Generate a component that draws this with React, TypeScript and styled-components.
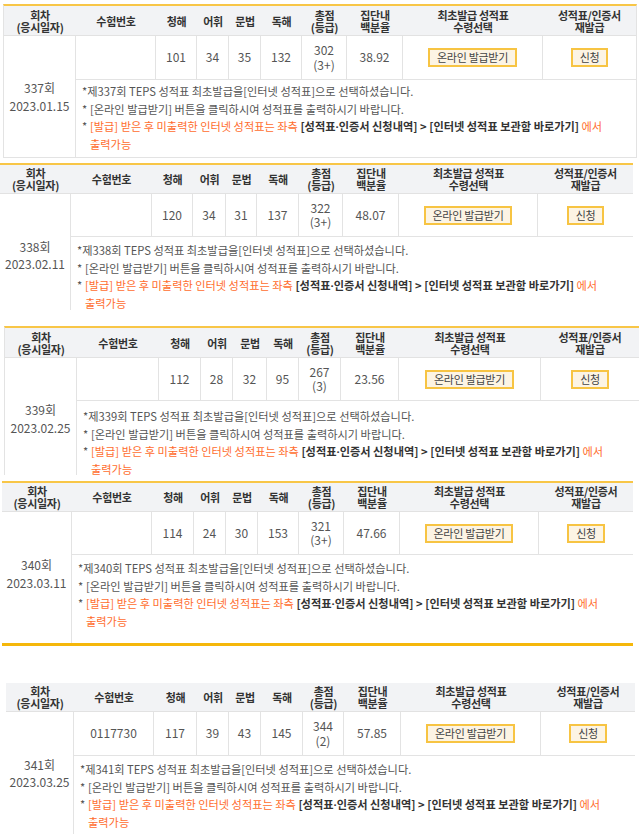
import React from 'react';
import styled, { createGlobalStyle } from 'styled-components';

const Global = createGlobalStyle`
  html, body { margin: 0; padding: 0; background: #fff; }
  body {
    width: 640px;
    overflow: hidden;
    font-family: "Noto Sans CJK KR", "Noto Sans", sans-serif;
    color: #555;
  }
`;

type Layout = {
  left: number;
  top: number;
  cols: number[];
  headerH: number;
  dataH: number;
  notesH: number;
  notesPad: number;
  topLine: boolean;
  frameL: boolean;
  frameR: boolean;
  frameB: boolean;
  thick: boolean;
  shift: number;
};

type Result = {
  round: number;
  date: string;
  exam: string;
  scores: number[];
  total: number;
  grade: string;
  pct: string;
  layout: Layout;
};

const results: Result[] = [
  {
    round: 337, date: '2023.01.15', exam: '', scores: [101, 34, 35, 132], total: 302, grade: '3+', pct: '38.92',
    layout: { left: 3, top: 4, cols: [72, 80, 41, 32, 32, 41, 45, 56, 140, 93], headerH: 30, dataH: 44, notesH: 77, notesPad: 3,
      topLine: true, frameL: true, frameR: true, frameB: true, thick: false, shift: 0 },
  },
  {
    round: 338, date: '2023.02.11', exam: '', scores: [120, 34, 31, 137], total: 322, grade: '3+', pct: '48.07',
    layout: { left: 0, top: 5, cols: [71, 81, 41, 33, 31, 42, 44, 56, 139, 95], headerH: 29, dataH: 43, notesH: 73, notesPad: 5,
      topLine: true, frameL: false, frameR: false, frameB: false, thick: false, shift: 6 },
  },
  {
    round: 339, date: '2023.02.25', exam: '', scores: [112, 28, 32, 95], total: 267, grade: '3', pct: '23.56',
    layout: { left: 4, top: 16, cols: [72, 82, 42, 32, 34, 32, 42, 58, 142, 98], headerH: 30, dataH: 43, notesH: 74, notesPad: 7,
      topLine: true, frameL: true, frameR: false, frameB: false, thick: false, shift: 4 },
  },
  {
    round: 340, date: '2023.03.11', exam: '', scores: [114, 24, 30, 153], total: 321, grade: '3+', pct: '47.66',
    layout: { left: 2, top: 6, cols: [70, 80, 42, 32, 32, 41, 45, 56, 139, 94], headerH: 29, dataH: 43, notesH: 88, notesPad: 5,
      topLine: true, frameL: false, frameR: false, frameB: false, thick: true, shift: -8 },
  },
  {
    round: 341, date: '2023.03.25', exam: '0117730', scores: [117, 39, 43, 145], total: 344, grade: '2', pct: '57.85',
    layout: { left: 6, top: 37, cols: [68, 80, 43, 32, 32, 42, 41, 57, 140, 94], headerH: 29, dataH: 44, notesH: 78, notesPad: 5,
      topLine: false, frameL: false, frameR: false, frameB: false, thick: false, shift: 0 },
  },
];

const Page = styled.main`
  display: flex;
  flex-direction: column;
  align-items: flex-start;
`;

const Panel = styled.section<{
  $left: number; $top: number; $cols: string; $rows: string;
  $topLine: boolean; $frameL: boolean; $frameR: boolean; $frameB: boolean; $thick: boolean;
}>`
  display: grid;
  grid-template-columns: ${(p) => p.$cols};
  grid-template-rows: ${(p) => p.$rows};
  margin-left: ${(p) => p.$left}px;
  margin-top: ${(p) => p.$top}px;
  border-top: ${(p) => (p.$topLine ? '2px solid #f8c647' : 'none')};
  border-left: ${(p) => (p.$frameL ? '1px solid #e3e3e3' : 'none')};
  border-right: ${(p) => (p.$frameR ? '1px solid #e3e3e3' : 'none')};
  border-bottom: ${(p) => (p.$thick ? '3px solid #f5b70a' : p.$frameB ? '1px solid #e3e3e3' : 'none')};
`;

const HeadCell = styled.div`
  display: flex;
  align-items: center;
  justify-content: center;
  text-align: center;
  background: #f2f3f5;
  border-bottom: 1px solid #e2e2e2;
  color: #333;
  font-size: 11px;
  font-weight: 700;
  line-height: 12px;
  letter-spacing: -0.3px;
  white-space: nowrap;
`;

const RoundCell = styled.div<{ $shift: number }>`
  grid-column: 1;
  grid-row: 2 / span 2;
  display: flex;
  flex-direction: column;
  align-items: center;
  justify-content: center;
  border-right: 1px solid #e3e3e3;
  font-size: 12px;
  line-height: 17.5px;
  color: #555;
  padding-top: ${(p) => (p.$shift > 0 ? p.$shift : 0)}px;
  padding-bottom: ${(p) => (p.$shift < 0 ? -p.$shift : 0)}px;
`;

const DataCell = styled.div<{ $last?: boolean }>`
  grid-row: 2;
  display: flex;
  flex-direction: column;
  align-items: center;
  justify-content: center;
  text-align: center;
  border-right: ${(p) => (p.$last ? 'none' : '1px solid #e3e3e3')};
  border-bottom: 1px solid #e3e3e3;
  font-size: 12px;
  line-height: 14.5px;
  color: #555;
`;

const ActionButton = styled.button`
  display: inline-flex;
  align-items: center;
  justify-content: center;
  height: 19px;
  padding: 0 7px;
  box-sizing: border-box;
  border: 2px solid #f7c443;
  background: #fcf4e4;
  color: #444;
  font-family: inherit;
  font-size: 11px;
  line-height: 1;
  letter-spacing: -0.3px;
  cursor: pointer;
`;

const NotesCell = styled.div<{ $pad: number }>`
  grid-column: 2 / -1;
  grid-row: 3;
  padding: ${(p) => p.$pad}px 0 0 6px;
  font-size: 11.2px;
  line-height: 17.5px;
  color: #555;
  white-space: nowrap;
`;

const NoteLine = styled.div`
  display: flex;
`;

const Marker = styled.span`
  flex: 0 0 auto;
  width: 8px;
`;

const Orange = styled.span`
  color: #ff6d2e;
`;

const Strong = styled.span`
  color: #333;
  font-weight: 700;
`;

const Dot = styled.span`
  font-family: "Noto Sans", sans-serif;
`;

const headers: string[][] = [
  ['회차', '(응시일자)'],
  ['수험번호'],
  ['청해'],
  ['어휘'],
  ['문법'],
  ['독해'],
  ['총점', '(등급)'],
  ['집단내', '백분율'],
  ['최초발급 성적표', '수령선택'],
  ['성적표/인증서', '재발급'],
];

function ResultTable({ r }: { r: Result }) {
  const l = r.layout;
  return (
    <Panel
      $left={l.left}
      $top={l.top}
      $cols={l.cols.map((c) => `${c}px`).join(' ')}
      $rows={`${l.headerH}px ${l.dataH}px ${l.notesH}px`}
      $topLine={l.topLine}
      $frameL={l.frameL}
      $frameR={l.frameR}
      $frameB={l.frameB}
      $thick={l.thick}
    >
      {headers.map((h, i) => (
        <HeadCell key={i}>
          <div>
            {h.map((t, j) => (
              <div key={j}>{t}</div>
            ))}
          </div>
        </HeadCell>
      ))}
      <RoundCell $shift={l.shift}>
        <div>{r.round}회</div>
        <div>{r.date}</div>
      </RoundCell>
      <DataCell>{r.exam}</DataCell>
      {r.scores.map((s, i) => (
        <DataCell key={i}>{s}</DataCell>
      ))}
      <DataCell>
        <div>{r.total}</div>
        <div>({r.grade})</div>
      </DataCell>
      <DataCell>{r.pct}</DataCell>
      <DataCell>
        <ActionButton type="button">온라인 발급받기</ActionButton>
      </DataCell>
      <DataCell $last>
        <ActionButton type="button">신청</ActionButton>
      </DataCell>
      <NotesCell $pad={l.notesPad}>
        <NoteLine>*제{r.round}회 TEPS 성적표 최초발급을[인터넷 성적표]으로 선택하셨습니다.</NoteLine>
        <NoteLine>
          <Marker>*</Marker>
          <span>[온라인 발급받기] 버튼을 클릭하시여 성적표를 출력하시기 바랍니다.</span>
        </NoteLine>
        <NoteLine>
          <Marker>*</Marker>
          <span>
            <Orange>[발급] 받은 후 미출력한 인터넷 성적표는 좌측</Orange>{' '}
            <Strong>
              [성적표<Dot>·</Dot>인증서 신청내역] &gt; [인터넷 성적표 보관함 바로가기]
            </Strong>{' '}
            <Orange>에서</Orange>
            <br />
            <Orange>출력가능</Orange>
          </span>
        </NoteLine>
      </NotesCell>
    </Panel>
  );
}

export default function App() {
  return (
    <>
      <Global />
      <Page>
        {results.map((r) => (
          <ResultTable key={r.round} r={r} />
        ))}
      </Page>
    </>
  );
}
